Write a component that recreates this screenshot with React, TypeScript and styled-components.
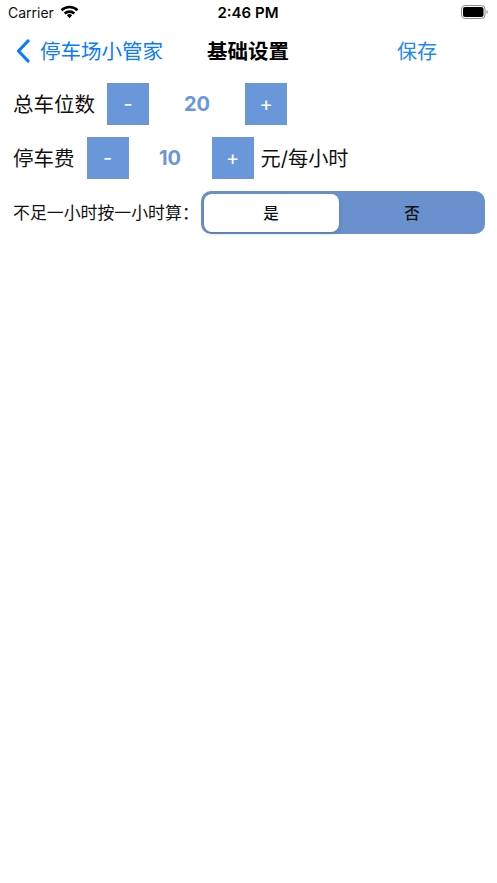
import React from "react";
import styled, {createGlobalStyle} from "styled-components";

const Global = createGlobalStyle`
  * { box-sizing: border-box; }
  html, body { margin: 0; padding: 0; background: #fff; }
  body {
    font-family: "Inter", "Liberation Sans", "Noto Sans CJK SC", sans-serif;
    color: #000;
  }
`;
const Page = styled.div`
  width: 497px;
  height: 883px;
  background: #fff;
  overflow: hidden;
`;
const StatusBar = styled.div`
  height: 27px;
  padding: 0 9px 3px 8px;
  display: grid;
  grid-template-columns: 1fr auto 1fr;
  align-items: center;
`;
const StatusLeft = styled.div`
  display: flex;
  align-items: center;
  gap: 6px;
  font-size: 14px;
  color: #111;
`;
const Time = styled.div`
  font-size: 15px;
  font-weight: 600;
`;
const StatusRight = styled.div`
  display: flex;
  justify-content: flex-end;
`;
const NavBar = styled.div`
  height: 48px;
  display: flex;
  align-items: center;
  padding-left: 16px;
`;
const BackText = styled.span`
  margin-left: 10px;
  padding-bottom: 2px;
  font-size: 20.5px;
  color: #0a7aff;
`;
const Title = styled.span`
  margin-left: 44px;
  padding-bottom: 2px;
  font-size: 20.5px;
  font-weight: 700;
`;
const Save = styled.span`
  margin-left: 108px;
  padding-bottom: 2px;
  font-size: 20px;
  color: #2188f5;
`;
const Content = styled.div`
  padding: 8px 12px 0 13px;
  display: flex;
  flex-direction: column;
  gap: 12px;
`;
const Row = styled.div`
  display: flex;
  align-items: center;
  height: 42px;
`;
const Label = styled.span`
  padding-bottom: 2px;
  font-size: 20.5px;
  color: #111;
  white-space: nowrap;
`;
const Unit = styled(Label)`
  margin-left: 7px;
  font-size: 20.2px;
`;
const StepButton = styled.div<{$first?: boolean}>`
  width: 42px;
  height: 42px;
  margin-left: ${p => p.$first ? "12px" : "0"};
  background: #6a97da;
  color: #fff;
  font-size: 20px;
  display: flex;
  align-items: center;
  justify-content: center;
`;
const Value = styled.div<{$width: number}>`
  width: ${p => p.$width}px;
  text-align: center;
  font-size: 20px;
  font-weight: 700;
  color: #6a97da;
`;
const SegmentRow = styled.div`
  display: flex;
  align-items: center;
  height: 43px;
`;
const SegmentLabel = styled.span`
  width: 188px;
  padding-bottom: 2px;
  font-size: 16.9px;
  color: #111;
  white-space: nowrap;
`;
const Segment = styled.div`
  width: 284px;
  height: 43px;
  padding: 2.5px;
  border-radius: 10px;
  background: #6a91cd;
  display: grid;
  grid-template-columns: 135px 1fr;
`;
const SegmentItem = styled.div<{$active?: boolean}>`
  padding: ${p => p.$active ? "0 0 2px 0" : "0 0 2px 3px"};
  border-radius: 8px;
  background: ${p => p.$active ? "#fff" : "transparent"};
  box-shadow: ${p => p.$active ? "0 2px 4px rgba(0,0,0,.15)" : "none"};
  display: flex;
  align-items: center;
  justify-content: center;
  font-size: 15.5px;
  font-weight: 500;
  color: #111;
`;

function App() {
    return (
        <Page>
            <Global />
            <StatusBar>
                <StatusLeft>
                    Carrier
                    <svg width="19" height="14" viewBox="0 0 19 14">
                        <path d="M1.5 5.2a11.5 11.5 0 0 1 16 0" fill="none" stroke="#000" strokeWidth="2.6" />
                        <path d="M4.7 8.5a7 7 0 0 1 9.6 0" fill="none" stroke="#000" strokeWidth="2.6" />
                        <path d="M6.8 10.3a4 4 0 0 1 5.4 0L9.5 13.2z" fill="#000" />
                    </svg>
                </StatusLeft>
                <Time>2:46 PM</Time>
                <StatusRight>
                    <svg width="27" height="14" viewBox="0 0 27 14">
                        <rect x="0.5" y="0.5" width="23.5" height="13" rx="3.5" fill="none" stroke="#8e8e8e" />
                        <rect x="2" y="2" width="20.5" height="10" rx="2" fill="#000" />
                        <path d="M25.5 5v4c.8-.3 1.3-1.1 1.3-2s-.5-1.700-1.3-2z" fill="#9a9a9a" />
                    </svg>
                </StatusRight>
            </StatusBar>
            <NavBar>
                <svg width="14" height="24" viewBox="0 0 14 24">
                    <path d="M12 2 2.5 12l9.5 10" fill="none" stroke="#0a7aff" strokeWidth="3.2" strokeLinecap="round" strokeLinejoin="round" />
                </svg>
                <BackText>停车场小管家</BackText>
                <Title>基础设置</Title>
                <Save>保存</Save>
            </NavBar>
            <Content>
                <Row>
                    <Label>总车位数</Label>
                    <StepButton $first>-</StepButton>
                    <Value $width={96}>20</Value>
                    <StepButton>+</StepButton>
                </Row>
                <Row>
                    <Label>停车费</Label>
                    <StepButton $first>-</StepButton>
                    <Value $width={83}>10</Value>
                    <StepButton>+</StepButton>
                    <Unit>元/每小时</Unit>
                </Row>
                <SegmentRow>
                    <SegmentLabel>不足一小时按一小时算：</SegmentLabel>
                    <Segment>
                        <SegmentItem $active>是</SegmentItem>
                        <SegmentItem>否</SegmentItem>
                    </Segment>
                </SegmentRow>
            </Content>
        </Page>
    );
}

export default App;
